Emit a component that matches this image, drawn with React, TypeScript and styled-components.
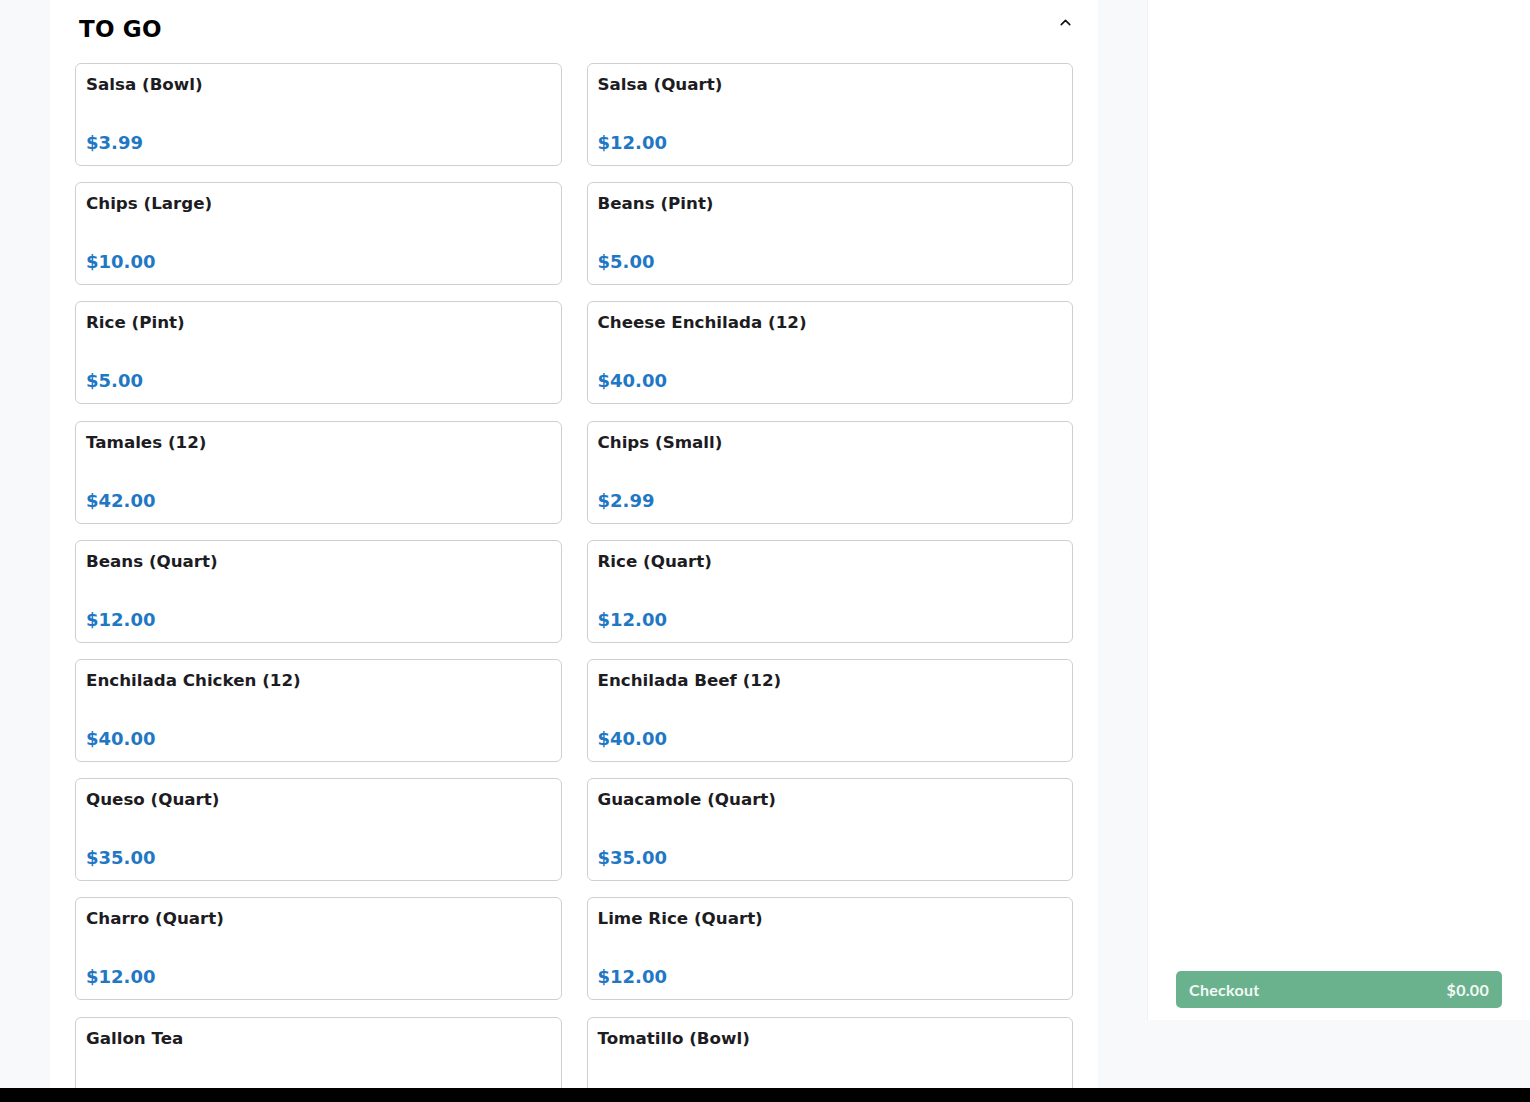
import styled, { createGlobalStyle } from "styled-components"
import { ChevronUp } from "lucide-react"

const items = [
    { name: "Salsa (Bowl)", price: 3.99 },
    { name: "Salsa (Quart)", price: 12 },
    { name: "Chips (Large)", price: 10 },
    { name: "Beans (Pint)", price: 5 },
    { name: "Rice (Pint)", price: 5 },
    { name: "Cheese Enchilada (12)", price: 40 },
    { name: "Tamales (12)", price: 42 },
    { name: "Chips (Small)", price: 2.99 },
    { name: "Beans (Quart)", price: 12 },
    { name: "Rice (Quart)", price: 12 },
    { name: "Enchilada Chicken (12)", price: 40 },
    { name: "Enchilada Beef (12)", price: 40 },
    { name: "Queso (Quart)", price: 35 },
    { name: "Guacamole (Quart)", price: 35 },
    { name: "Charro (Quart)", price: 12 },
    { name: "Lime Rice (Quart)", price: 12 },
    { name: "Gallon Tea", price: 15 },
    { name: "Tomatillo (Bowl)", price: 3.99 },
]

const GlobalStyle = createGlobalStyle`
  html, body {
    margin: 0;
    padding: 0;
    background: #f8f9fa;
    font-family: "DejaVu Sans", sans-serif;
    overflow: hidden;
  }
`

const Page = styled.div`
  height: 100vh;
  display: flex;
  flex-direction: column;
`

const Body = styled.div`
  flex: 1;
  min-height: 0;
  display: flex;
  align-items: flex-start;
  overflow: hidden;
`

const Menu = styled.section`
  margin-left: 50px;
  width: 1048px;
  background: #fff;
  padding: 0 24px 0 25px;
  box-sizing: border-box;
  align-self: stretch;
  overflow: hidden;
`

const SectionHeader = styled.div`
  display: flex;
  align-items: center;
  justify-content: space-between;
  height: 57px;
  padding: 1px 0 0 4px;
  margin-bottom: 6px;
  box-sizing: border-box;

  h2 {
    margin: 0;
    font-size: 23px;
    font-weight: 700;
    color: #000;
    letter-spacing: 0.2px;
  }

  svg {
    margin-top: -13px;
  }
`

const Grid = styled.div`
  display: grid;
  grid-template-columns: 1fr 1fr;
  column-gap: 25px;
  row-gap: 16.2px;
  margin-right: 1px;
`

const Card = styled.div`
  height: 103px;
  box-sizing: border-box;
  border: 1px solid #cfcfcf;
  border-radius: 6px;
  padding: 9px 10px 11px;
  display: flex;
  flex-direction: column;
  justify-content: space-between;
  background: #fff;
`

const ItemName = styled.div`
  font-size: 16.7px;
  font-weight: 700;
  color: #1c1c22;
  line-height: 22px;
`

const ItemPrice = styled.div`
  font-size: 18px;
  font-weight: 700;
  color: #1f78c4;
  line-height: 22px;
`

const Side = styled.aside`
  margin-left: 49px;
  flex: 1;
  height: 1020px;
  background: #fff;
  border-left: 1px solid #f0f0f0;
  display: flex;
  flex-direction: column;
  justify-content: flex-end;
  padding: 0 28px 12px 28px;
  box-sizing: border-box;
`

const CheckoutButton = styled.button`
  height: 37px;
  border: none;
  border-radius: 5px;
  background: #6ab28e;
  color: #f3f8f5;
  display: flex;
  align-items: center;
  justify-content: space-between;
  padding: 0 13px;
  font-family: Lato, "Noto Sans", sans-serif;
  font-weight: 700;
  font-size: 16px;
  letter-spacing: 0.3px;
  cursor: pointer;
`

const BottomBar = styled.div`
  height: 14px;
  background: #000;
  flex-shrink: 0;
`

export default function App() {
    return (
        <Page>
            <GlobalStyle />
            <Body>
                <Menu>
                    <SectionHeader>
                        <h2>TO GO</h2>
                        <ChevronUp size={17} strokeWidth={2.2} color="#111" />
                    </SectionHeader>
                    <Grid>
                        {items.map(item => (
                            <Card key={item.name}>
                                <ItemName>{item.name}</ItemName>
                                <ItemPrice>${item.price.toFixed(2)}</ItemPrice>
                            </Card>
                        ))}
                    </Grid>
                </Menu>
                <Side>
                    <CheckoutButton>
                        <span>Checkout</span>
                        <span>$0.00</span>
                    </CheckoutButton>
                </Side>
            </Body>
            <BottomBar />
        </Page>
    )
}
